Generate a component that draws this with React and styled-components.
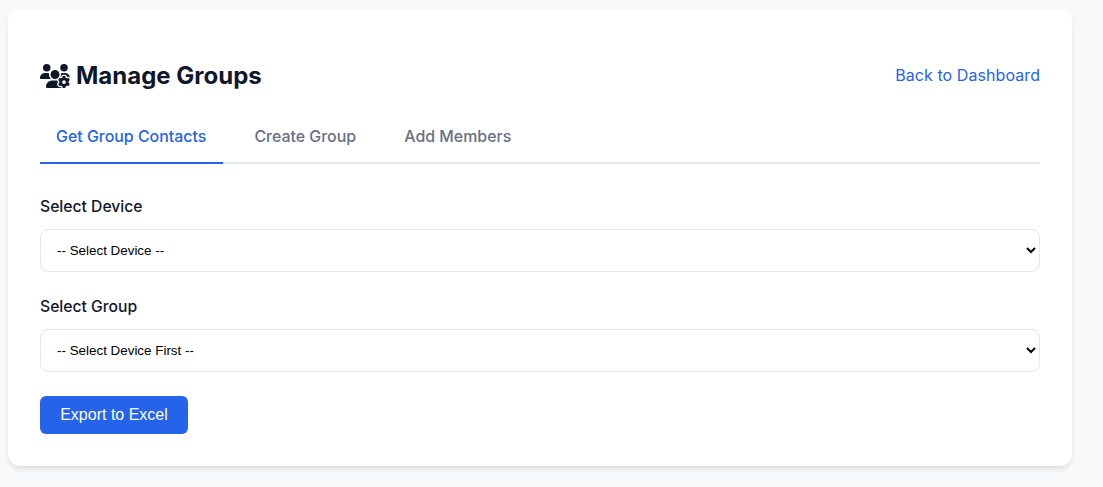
import React, { useState } from "react";
import styled, { createGlobalStyle } from "styled-components";
import { FaUsersGear } from "react-icons/fa6";

const GlobalStyle = createGlobalStyle`
  body {
    margin: 0;
    background-color: #f8f9fb;
    font-family: "Inter", "Liberation Sans", sans-serif;
    color: #0f172a;
  }
`;

const tabs = ["Get Group Contacts", "Create Group", "Add Members"];

const App = () => {
  const [active, setActive] = useState(0);

  return (
    <>
      <GlobalStyle />
      <Page>
        <Card>
          <Header>
            <Title>
              <FaUsersGear size={30} />
              Manage Groups
            </Title>
            <BackLink href="#">Back to Dashboard</BackLink>
          </Header>

          <TabBar>
            {tabs.map((tab, i) => (
              <Tab key={tab} $active={i === active} onClick={() => setActive(i)}>
                {tab}
              </Tab>
            ))}
          </TabBar>

          <Field>
            <Label>Select Device</Label>
            <Select>
              <option>-- Select Device --</option>
            </Select>
          </Field>

          <Field>
            <Label>Select Group</Label>
            <Select>
              <option>-- Select Device First --</option>
            </Select>
          </Field>

          <ExportBtn>Export to Excel</ExportBtn>
        </Card>
      </Page>
    </>
  );
};

export default App;

const Page = styled.div`
  padding: 9px 31px 21px 8px;
`;

const Card = styled.div`
  background-color: #fff;
  border-radius: 12px;
  padding: 49px 32px 32px;
  box-shadow: 0 4px 6px -1px rgba(0, 0, 0, 0.1), 0 2px 4px -2px rgba(0, 0, 0, 0.05);
`;

const Header = styled.div`
  display: flex;
  justify-content: space-between;
  align-items: center;
  margin-bottom: 19px;
`;

const Title = styled.h1`
  display: flex;
  align-items: center;
  gap: 6px;
  margin: 0;
  font-size: 24px;
  line-height: 36px;
  font-weight: 700;
  color: #0f172a;
`;

const BackLink = styled.a`
  font-size: 16px;
  line-height: 24px;
  margin-bottom: 2px;
  color: #2563eb;
  text-decoration: none;
  letter-spacing: 0.07px;
`;

const TabBar = styled.div`
  display: flex;
  border-bottom: 2px solid #e2e8f0;
  margin-bottom: 31px;
`;

const Tab = styled.div`
  padding: 12px 16.6px 13px 16px;
  margin-bottom: -2px;
  margin-right: 15.6px;
  font-size: 15.92px;
  line-height: 24px;
  font-weight: 500;
  cursor: pointer;
  color: ${(p) => (p.$active ? "#2563eb" : "#667085")};
  border-bottom: 2px solid ${(p) => (p.$active ? "#2563eb" : "transparent")};
`;

const Field = styled.div`
  margin-bottom: 23px;
`;

const Label = styled.label`
  display: block;
  margin-bottom: 10px;
  font-size: 15.7px;
  line-height: 24px;
  font-weight: 500;
  color: #0f172a;
`;

const Select = styled.select`
  display: block;
  width: 100%;
  height: 43px;
  padding: 0 12px;
  background-color: #fff;
  border: 1px solid #e2e8f0;
  border-radius: 8px;
  font-family: "Liberation Sans", Arial, sans-serif;
  font-size: 13.4px;
  color: #000;
`;

const ExportBtn = styled.button`
  display: block;
  width: 148px;
  height: 38px;
  margin-top: 24px;
  background-color: #2563eb;
  color: #fff;
  border: none;
  border-radius: 6px;
  font-family: "Liberation Sans", Arial, sans-serif;
  font-size: 16px;
  cursor: pointer;
`;
